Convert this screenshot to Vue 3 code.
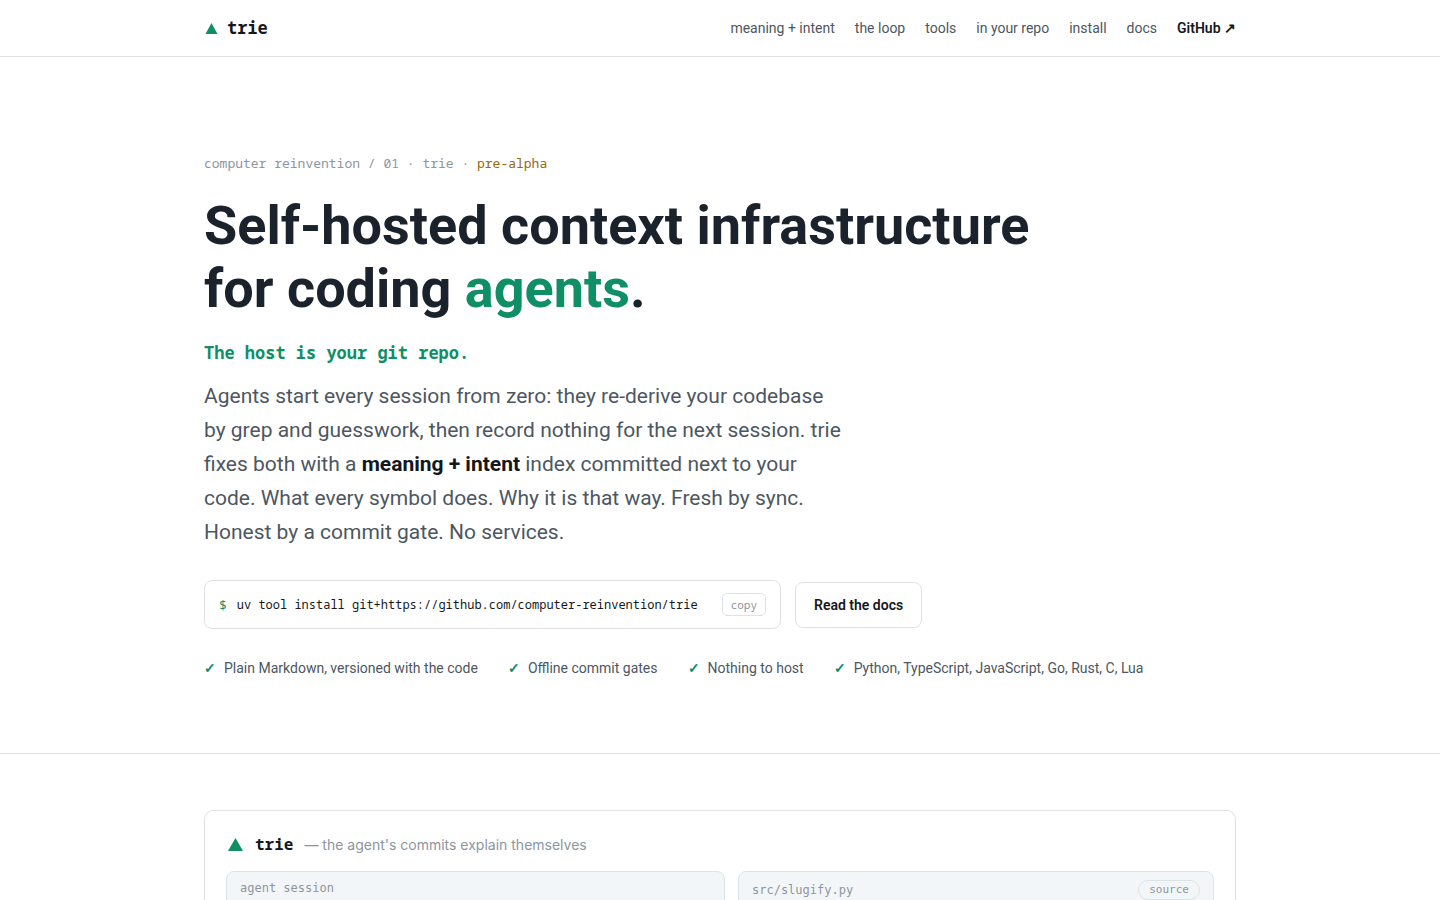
<script setup>
import { ref } from 'vue'

const links = ['meaning + intent', 'the loop', 'tools', 'in your repo', 'install', 'docs']
const points = [
  'Plain Markdown, versioned with the code',
  'Offline commit gates',
  'Nothing to host',
  'Python, TypeScript, JavaScript, Go, Rust, C, Lua',
]
const command = 'uv tool install git+https://github.com/computer-reinvention/trie'
const copyLabel = ref('copy')

function copy() {
  navigator.clipboard?.writeText(command)
  copyLabel.value = 'copied'
}
</script>

<template>
  <div class="page">
    <header class="topbar">
      <div class="wrap bar">
        <a class="brand" href="#">
          <svg class="mark" viewBox="0 0 14 14" aria-hidden="true"><path d="M7.5 2 13.5 13H1.5Z" /></svg>
          <span>trie</span>
        </a>
        <nav class="nav">
          <a v-for="link in links" :key="link" href="#">{{ link }}</a>
          <a class="github" href="#">GitHub ↗</a>
        </nav>
      </div>
    </header>

    <main>
      <section class="hero">
        <div class="wrap">
          <p class="eyebrow">computer reinvention / 01 · trie · <span>pre-alpha</span></p>
          <h1>Self-hosted context infrastructure<br />for coding <em>agents</em>.</h1>
          <p class="tagline">The host is your git repo.</p>
          <p class="lead">
            Agents start every session from zero: they re-derive your codebase by grep and
            guesswork, then record nothing for the next session. trie fixes both with a
            <strong>meaning + intent</strong> index committed next to your code. What every
            symbol does. Why it is that way. Fresh by sync. Honest by a commit gate. No services.
          </p>
          <div class="actions">
            <div class="install">
              <span class="prompt">$</span>
              <code>{{ command }}</code>
              <button type="button" @click="copy">{{ copyLabel }}</button>
            </div>
            <a class="docs" href="#">Read the docs</a>
          </div>
          <ul class="points">
            <li v-for="point in points" :key="point"><span class="tick">✓</span>{{ point }}</li>
          </ul>
        </div>
      </section>

      <section class="wrap demo">
        <div class="card">
          <div class="card-head">
            <svg class="card-mark" viewBox="0 0 16 14" aria-hidden="true"><path d="M8.5 1 16 14H1Z" /></svg>
            <b>trie</b>
            <span>— the agent's commits explain themselves</span>
          </div>
          <div class="panes">
            <div class="pane">
              <div class="pane-head session">agent session</div>
            </div>
            <div class="pane">
              <div class="pane-head"><span>src/slugify.py</span><span class="pill">source</span></div>
            </div>
          </div>
        </div>
      </section>
    </main>
  </div>
</template>

<style>
body {
  background: #fff;
}
</style>

<style scoped>
.page {
  --mono: "Noto Sans Mono", monospace;
  --green: #0f8f63;
  --ink: #14181d;
  --slate: #4d5761;
  --muted: #8c96a1;
  --line: #dfe3e5;
  height: 100vh;
  overflow: hidden;
  color: var(--slate);
  font-family: Roboto, sans-serif;
}
.page * {
  box-sizing: border-box;
}
p,
h1,
ul {
  margin: 0;
  padding: 0;
}
a {
  color: inherit;
  text-decoration: none;
}
.wrap {
  max-width: 1080px;
  margin: 0 auto;
  padding: 0 24px;
}
.topbar {
  border-bottom: 1px solid var(--line);
}
.bar {
  display: flex;
  align-items: center;
  justify-content: space-between;
  height: 56px;
}
.brand {
  display: flex;
  align-items: center;
  gap: 9px;
  color: var(--ink);
  font: 700 17px/24px var(--mono);
}
.mark {
  width: 14px;
  height: 14px;
  fill: var(--green);
}
.nav {
  display: flex;
  gap: 20px;
  font-size: 14px;
  line-height: 24px;
}
.github {
  color: var(--ink);
  font-weight: 600;
}
.hero {
  padding: 96px 0 73px;
  border-bottom: 1px solid var(--line);
}
.eyebrow {
  color: var(--muted);
  font: 13px/20px var(--mono);
}
.eyebrow span {
  color: #96690f;
}
h1 {
  margin-top: 21px;
  color: #1a222c;
  font-size: 54px;
  font-weight: 700;
  line-height: 63px;
}
h1 em {
  color: var(--green);
  font-style: normal;
}
.tagline {
  margin-top: 19px;
  color: var(--green);
  font: 700 17px/28px var(--mono);
}
.lead {
  max-width: 640px;
  margin-top: 12px;
  font-size: 21px;
  line-height: 34px;
}
.lead strong {
  color: var(--ink);
}
.actions {
  display: flex;
  align-items: center;
  gap: 14px;
  margin-top: 31px;
}
.install {
  display: flex;
  align-items: center;
  height: 49px;
  padding: 0 14px;
  border: 1px solid var(--line);
  border-radius: 8px;
  color: var(--ink);
  font: 12px/20px var(--mono);
}
.prompt {
  margin-right: 10px;
  color: var(--green);
  font-size: 13px;
}
code {
  font-family: inherit;
}
.install button {
  height: 23px;
  margin-left: 24px;
  padding: 0 8px;
  border: 1px solid var(--line);
  border-radius: 5px;
  background: #fff;
  color: var(--muted);
  font: 11px/20px var(--mono);
}
.docs {
  padding: 10px 18px;
  border: 1px solid var(--line);
  border-radius: 8px;
  color: var(--ink);
  font-size: 14px;
  font-weight: 600;
  line-height: 24px;
}
.points {
  display: flex;
  flex-wrap: wrap;
  gap: 12px 30px;
  margin-top: 27px;
  list-style: none;
  font-size: 14px;
  line-height: 24px;
}
.tick {
  margin-right: 8px;
  color: var(--green);
  font-weight: 700;
}
.demo {
  padding-top: 56px;
}
.card {
  min-height: 480px;
  padding: 19px 21px;
  border: 1px solid var(--line);
  border-radius: 9px;
}
.card-head {
  display: flex;
  align-items: center;
  height: 28px;
  padding-left: 1px;
  color: var(--muted);
  font-family: Inter, sans-serif;
  font-size: 14px;
}
.card-mark {
  width: 16px;
  height: 14px;
  margin-right: 12px;
  fill: var(--green);
}
.card-head b {
  margin-right: 11px;
  color: var(--ink);
  font: 700 16px/24px var(--mono);
}
.panes {
  display: grid;
  grid-template-columns: 1fr 476px;
  gap: 13px;
  margin-top: 13px;
}
.pane {
  min-height: 380px;
  border: 1px solid #dce5e6;
  border-radius: 8px;
  background: #f3f6f8;
}
.pane-head {
  display: flex;
  align-items: center;
  justify-content: space-between;
  height: 36px;
  padding: 0 13px;
  color: var(--muted);
  font: 12px/20px "DejaVu Sans Mono", monospace;
}
.session {
  height: 32px;
}
.pill {
  padding: 0 10px;
  border: 1px solid #dce3e6;
  border-radius: 10px;
  font-size: 11px;
  line-height: 18px;
}
</style>
